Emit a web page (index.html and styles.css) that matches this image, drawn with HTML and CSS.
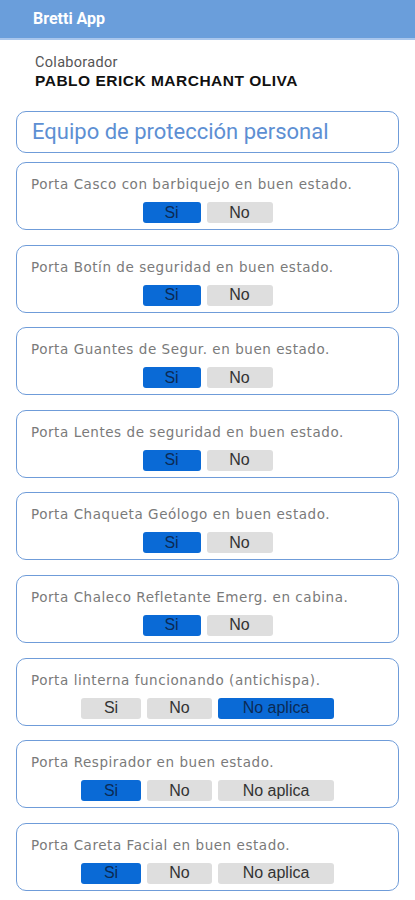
FILE: index.html
```html
<!DOCTYPE html>
<html lang="es">
<head>
    <meta charset="UTF-8">
    <meta name="viewport" content="width=device-width, initial-scale=1.0">
    <title>Bretti App</title>
    <link rel="stylesheet" href="styles.css">
</head>
<body>
    <div class="header">Bretti App</div>

    <div class="collab">
        <div class="collab-label">Colaborador</div>
        <div class="collab-name">PABLO ERICK MARCHANT OLIVA</div>
    </div>

    <div class="title-card">Equipo de protección personal</div>

    <div class="card">
        <div class="question">Porta Casco con barbiquejo en buen estado.</div>
        <div class="options">
            <button class="opt opt-si active">Si</button>
            <button class="opt opt-no">No</button>
        </div>
    </div>

    <div class="card">
        <div class="question">Porta Botín de seguridad en buen estado.</div>
        <div class="options">
            <button class="opt opt-si active">Si</button>
            <button class="opt opt-no">No</button>
        </div>
    </div>

    <div class="card">
        <div class="question">Porta Guantes de Segur. en buen estado.</div>
        <div class="options">
            <button class="opt opt-si active">Si</button>
            <button class="opt opt-no">No</button>
        </div>
    </div>

    <div class="card">
        <div class="question">Porta Lentes de seguridad en buen estado.</div>
        <div class="options">
            <button class="opt opt-si active">Si</button>
            <button class="opt opt-no">No</button>
        </div>
    </div>

    <div class="card">
        <div class="question">Porta Chaqueta Geólogo en buen estado.</div>
        <div class="options">
            <button class="opt opt-si active">Si</button>
            <button class="opt opt-no">No</button>
        </div>
    </div>

    <div class="card">
        <div class="question">Porta Chaleco Refletante Emerg. en cabina.</div>
        <div class="options">
            <button class="opt opt-si active">Si</button>
            <button class="opt opt-no">No</button>
        </div>
    </div>

    <div class="card">
        <div class="question">Porta linterna funcionando (antichispa).</div>
        <div class="options">
            <button class="opt opt-si3">Si</button>
            <button class="opt opt-no3">No</button>
            <button class="opt opt-na active">No aplica</button>
        </div>
    </div>

    <div class="card">
        <div class="question">Porta Respirador en buen estado.</div>
        <div class="options">
            <button class="opt opt-si3 active">Si</button>
            <button class="opt opt-no3">No</button>
            <button class="opt opt-na">No aplica</button>
        </div>
    </div>

    <div class="card">
        <div class="question">Porta Careta Facial en buen estado.</div>
        <div class="options">
            <button class="opt opt-si3 active">Si</button>
            <button class="opt opt-no3">No</button>
            <button class="opt opt-na">No aplica</button>
        </div>
    </div>
</body>
</html>
```

FILE: styles.css
```css
body {
    margin: 0;
    font-family: Roboto, "Liberation Sans", Arial, sans-serif;
    background: #fff;
}
.header {
    height: 38px;
    line-height: 38px;
    padding-left: 33px;
    background-color: #6a9edb;
    border-bottom: 2px solid #a9c6ec;
    color: white;
    font-weight: bold;
    font-size: 16px;
}
.collab {
    padding: 14px 35px 0;
}
.collab-label {
    font-size: 14.5px;
    line-height: 17px;
    letter-spacing: 0.3px;
    color: #555;
}
.collab-name {
    font-family: "Liberation Sans", Arial, sans-serif;
    font-weight: bold;
    font-size: 15.5px;
    line-height: 19px;
    letter-spacing: 0.5px;
    color: #111;
}
.title-card {
    margin: 21px 16px 9px;
    height: 40px;
    line-height: 40px;
    padding-left: 15px;
    border: 1.5px solid #6f9cd9;
    border-radius: 10px;
    color: #5d8fd3;
    font-size: 22px;
}
.card {
    margin: 0 16px 14.6px;
    padding: 12px 14px 6px;
    border: 1.5px solid #6f9cd9;
    border-radius: 10px;
}
.question {
    font-family: "DejaVu Sans", sans-serif;
    font-size: 13.5px;
    line-height: 18px;
    letter-spacing: 0.55px;
    color: #7a7a7a;
}
.options {
    display: flex;
    justify-content: center;
    gap: 6px;
    margin-top: 9px;
}
.opt {
    height: 21px;
    padding: 0;
    border: none;
    border-radius: 3px;
    background-color: #dedede;
    color: #333;
    font-family: "Liberation Sans", Arial, sans-serif;
    font-size: 16px;
}
.opt.active {
    background-color: #0a6ad6;
    color: #0b2a55;
}
.opt-si { width: 58px; }
.opt-no { width: 66px; }
.opt-si3 { width: 60px; }
.opt-no3 { width: 65px; }
.opt-na { width: 116px; }
```
